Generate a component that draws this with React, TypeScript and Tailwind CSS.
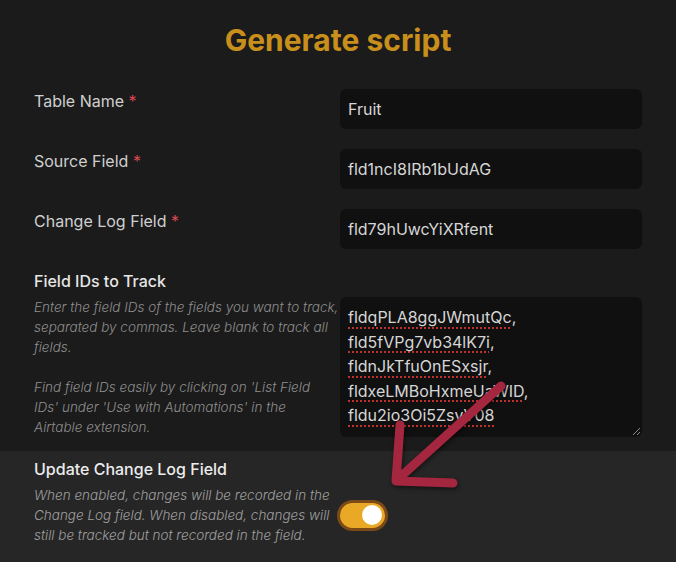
import React from "react";

const trackedIds = [
  "fldqPLA8ggJWmutQc,",
  "fld5fVPg7vb34lK7i,",
  "fldnJkTfuOnESxsjr,",
  "fldxeLMBoHxmeUaWID,",
  "fldu2io3Oi5ZsvV08",
];

function FieldRow({ label, value }: { label: string; value: string }) {
  return (
    <div className="grid grid-cols-[minmax(0,1fr)_302px] gap-x-1">
      <label className="text-base leading-6 text-[#cfcfcf]">
        {label} <span className="text-[#d9484f]">*</span>
      </label>
      <div className="h-10 rounded-md bg-[#101010] px-2 flex items-center text-base text-[#d6d6d6]">
        {value}
      </div>
    </div>
  );
}

export default function App() {
  return (
    <div className="relative min-h-screen flex flex-col bg-[#1b1b1b] font-['Inter',sans-serif]">
      <div className="px-[34px] pt-5">
        <h1 className="text-center text-[30px] font-bold leading-10 text-[#c98f1b]">
          Generate script
        </h1>

        <div className="mt-[29px] flex flex-col gap-5">
          <FieldRow label="Table Name" value="Fruit" />
          <FieldRow label="Source Field" value="fld1ncI8IRb1bUdAG" />
          <FieldRow label="Change Log Field" value="fld79hUwcYiXRfent" />

          <div>
            <div className="text-base font-medium leading-6 text-[#e6e6e6]">Field IDs to Track</div>
            <div className="mt-1 grid grid-cols-[minmax(0,1fr)_302px] gap-x-1">
              <div className="min-w-0 text-[13.5px] italic font-light leading-5 text-[#8e8e8e] whitespace-nowrap">
                <p>
                  Enter the field IDs of the fields you want to track,
                  <br />
                  separated by commas. Leave blank to track all
                  <br />
                  fields.
                </p>
                <p className="mt-5">
                  Find field IDs easily by clicking on 'List Field
                  <br />
                  IDs' under 'Use with Automations' in the
                  <br />
                  Airtable extension.
                </p>
              </div>
              <div className="relative h-[140px] rounded-md bg-[#101010] px-2 pt-2 text-base leading-[24.5px] text-[#d6d6d6]">
                {trackedIds.map((id) => (
                  <div key={id}>
                    <span className="underline decoration-dotted decoration-[#c0302f] decoration-2 underline-offset-[4px]">
                      {id.replace(",", "")}
                    </span>
                    {id.endsWith(",") ? "," : ""}
                  </div>
                ))}
                <svg className="absolute right-[1px] bottom-[1px]" width="9" height="9" viewBox="0 0 9 9">
                  <path d="M8 1 L1 8 M8 5 L5 8" stroke="#8a8a8a" strokeWidth="1" />
                </svg>
              </div>
            </div>
          </div>
        </div>
      </div>

      <div className="mt-[14px] flex-1 bg-[#262626] px-[34px] pt-[6px]">
        <div className="text-base font-medium leading-6 text-[#ececec]">Update Change Log Field</div>
        <div className="mt-1 grid grid-cols-[minmax(0,1fr)_302px] gap-x-1 items-center">
          <p className="min-w-0 text-[13.5px] italic font-light leading-5 text-[#a0a0a0] whitespace-nowrap">
            When enabled, changes will be recorded in the
            <br />
            Change Log field. When disabled, changes will
            <br />
            still be tracked but not recorded in the field.
          </p>
          <div className="w-[45px] h-[25px] rounded-full bg-[#e9a826] ring-[3px] ring-[#7b4a17] flex items-center justify-end pr-[3px]">
            <div className="w-5 h-5 rounded-full bg-white" />
          </div>
        </div>
      </div>

      <svg
        className="absolute left-0 top-0 pointer-events-none drop-shadow-[1px_2px_2px_rgba(0,0,0,0.5)]"
        width="676"
        height="562"
        viewBox="0 0 676 562"
      >
        <path
          d="M501 386 L397 480 M400 425 L396 481 L453 483"
          fill="none"
          stroke="#a4263f"
          strokeWidth="9"
          strokeLinecap="round"
          strokeLinejoin="round"
        />
      </svg>
    </div>
  );
}
